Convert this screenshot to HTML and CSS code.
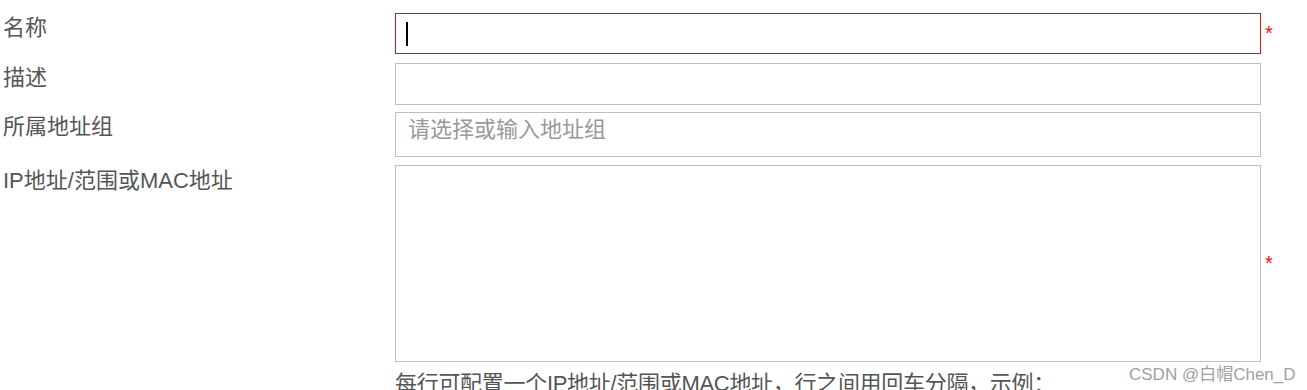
FILE: index.html
```html
<!DOCTYPE html>
<html lang="zh-CN">
<head>
  <meta charset="UTF-8">
  <meta name="viewport" content="width=device-width, initial-scale=1.0">
  <title>地址对象</title>
  <link rel="stylesheet" href="styles.css">
</head>
<body>
  <form class="form">
    <div class="row row-name">
      <label class="label">名称</label>
      <div class="field field-error"><span class="caret"></span></div>
      <span class="req">*</span>
    </div>
    <div class="row row-desc">
      <label class="label">描述</label>
      <div class="field"></div>
      <span></span>
    </div>
    <div class="row row-group">
      <label class="label">所属地址组</label>
      <div class="field placeholder">请选择或输入地址组</div>
      <span></span>
    </div>
    <div class="row row-addr">
      <label class="label">IP地址/范围或MAC地址</label>
      <div class="field area"></div>
      <span class="req">*</span>
    </div>
    <div class="row">
      <span></span>
      <p class="help">每行可配置一个IP地址/范围或MAC地址，行之间用回车分隔，示例：</p>
    </div>
  </form>
  <div class="watermark">CSDN @白帽Chen_D</div>
</body>
</html>
```

FILE: styles.css
```css
/* Basic styling */
body {
  font-family: "Liberation Sans", Arial, "Noto Sans CJK SC", sans-serif;
  margin: 0;
  padding: 13px 0 0 3px;
  color: #555;
  background: #fff;
  overflow: hidden;
}
.form {
  display: flex;
  flex-direction: column;
}
.row {
  display: grid;
  grid-template-columns: 392px 866px 1fr;
  align-items: start;
}
.label {
  font-size: 22px;
  line-height: 26px;
  padding-top: 2px;
}
.field {
  box-sizing: border-box;
  border: 1px solid #bebec4;
  background: #fff;
  font-size: 22px;
  line-height: 26px;
}
.field-error {
  border-color: #c8141e;
  height: 41px;
  padding: 8px 12px;
}
.caret {
  display: block;
  width: 2px;
  height: 24px;
  background: #000;
  margin-left: -2px;
}
.row-name {
  margin-bottom: 9px;
}
.row-desc {
  margin-bottom: 7px;
}
.row-desc .field {
  height: 42px;
}
.row-group {
  margin-bottom: 8px;
}
.row-group .field {
  height: 45px;
}
.placeholder {
  color: #999;
  padding: 4px 12px;
}
.row-addr .label {
  padding-top: 3px;
}
.area {
  height: 197px;
}
.row-name, .row-addr {
  align-items: stretch;
}
.req {
  color: #e8101e;
  font-size: 20px;
  padding-left: 4px;
  display: flex;
  align-items: center;
}
.help {
  margin: 9px 0 0;
  font-size: 22px;
  line-height: 26px;
  letter-spacing: -0.3px;
}
.watermark {
  position: absolute;
  left: 1129px;
  top: 360px;
  font-size: 17px;
  color: #a0a0a0;
}
```
